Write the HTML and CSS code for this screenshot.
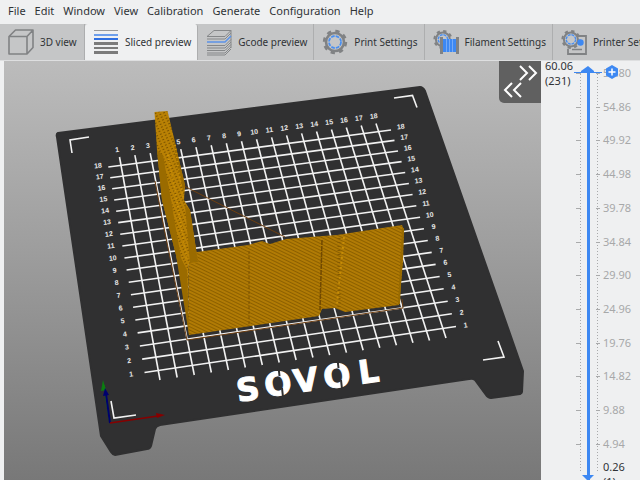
FILE: index.html
```html
<!DOCTYPE html>
<html lang="en">
<head>
<meta charset="utf-8">
<title>Slicer preview</title>
<link rel="stylesheet" href="styles.css">
</head>
<body>
<nav class="menubar" aria-label="Main menu">
  <button>File</button>
  <button>Edit</button>
  <button>Window</button>
  <button>View</button>
  <button>Calibration</button>
  <button>Generate</button>
  <button>Configuration</button>
  <button>Help</button>
</nav>

<div class="tabs" role="tablist">
  <button class="tab" role="tab">
    <svg class="icon" viewBox="0 0 28 28" fill="none" stroke="#808284" stroke-width="1.6" stroke-linejoin="round"><path d="M2 8.500H20V26H2ZM2 8.500L8.500 2H26V19.500L20 26M20 8.500L26 2"/></svg>
    <span>3D view</span>
  </button>
  <button class="tab active" role="tab" aria-selected="true">
    <svg class="icon" viewBox="0 0 28 28"><path fill="#999" d="M2 2h24v1H2z"/><path fill="#6d9eeb" d="M2 6h24v2H2z"/><path fill="#2f6fe0" d="M2 10h24v2H2z"/><path fill="#7b7b7b" d="M2 14h24v3H2zM2 19h24v2H2zM2 23h24v3H2z"/></svg>
    <span>Sliced preview</span>
  </button>
  <button class="tab" role="tab">
    <svg class="icon" viewBox="0 0 28 28" fill="none" stroke="#858789" stroke-width="1"><path d="M2 8.500L9 2.500H26L20 8.500ZM26 2.500V20M2 11h18l6-6M2 17.500h18l6-6M2 20h18l6-6M2 22.500h18l6-6M2 25h18l6-6M2 27h18l6-6"/><path stroke="#5c93e8" stroke-width="1.500" d="M2 14h18l6-6"/></svg>
    <span>Gcode preview</span>
  </button>
  <button class="tab" role="tab">
    <svg class="icon" viewBox="0 0 28 28"><use href="#gear"/></svg>
    <span>Print Settings</span>
  </button>
  <button class="tab" role="tab">
    <svg class="icon" viewBox="0 0 28 28"><use href="#gear" transform="translate(0 .5) scale(.78)"/><path fill="#808284" d="M8 9h3v17H8zM24 9h3v17h-3z"/><path fill="#3d88f2" d="M11 11h13v13H11z"/><path stroke="#76aaf5" d="M14.500 11v13M17.500 11v13M20.500 11v13"/></svg>
    <span>Filament Settings</span>
  </button>
  <button class="tab" role="tab">
    <svg class="icon" viewBox="0 0 28 28"><path fill="none" stroke="#808284" stroke-width="1.800" d="M17 8h9v18H8v-5"/><use href="#gear" transform="translate(0 .5) scale(.78)"/><path stroke="#808284" stroke-width="1.500" d="M12 21.500h10"/><circle cx="20.500" cy="14.500" r="3.200" fill="#3d88f2"/></svg>
    <span>Printer Settings</span>
  </button>
</div>

<main class="workspace">
  <section class="viewport" aria-label="Sliced model">
    <svg class="scene" viewBox="4 61 537 419" preserveAspectRatio="xMinYMin slice">
      <defs>
        <g id="gear">
          <circle cx="14" cy="14" r="9" fill="none" stroke="#808284" stroke-width="2.600"/>
          <circle cx="14" cy="14" r="10.900" fill="none" stroke="#808284" stroke-width="2.600" stroke-dasharray="4.280 4.280"/>
          <circle cx="14" cy="14" r="6" fill="none" stroke="#4a8ff0" stroke-width="1.800" stroke-dasharray="3.600 1.110"/>
        </g>
        <linearGradient id="sky" x1="0" y1="0" x2="0" y2="1"><stop offset="0" stop-color="#bcbcbc"/><stop offset="1" stop-color="#787878"/></linearGradient>
        <pattern id="layers" width="3" height="3" patternUnits="userSpaceOnUse" patternTransform="rotate(26)"><path fill="#b17b05" d="M0 0h3v3H0z"/><path fill="#8c6000" d="M0 0h3v1H0z"/></pattern>
        <pattern id="rough" width="4" height="3" patternUnits="userSpaceOnUse" patternTransform="rotate(-25)"><path fill="#b98104" d="M0 0h4v3H0z"/><path fill="#7d5500" d="M0 0h2v1H0z"/></pattern>
      </defs>
      <path fill="url(#sky)" d="M4 61h537v419H4z"/>
      <path fill="#303031" stroke="#303031" stroke-width="2" stroke-linejoin="round" d="M58 133L420 87Q423 87 425 91L523 371L522 392Q522 393 520 394L491 398Q488 398 486 395L475 380Q473 378 469 379L160 425Q156 426 155 429L151 446Q150 449 147 449L115 455Q113 455 111 452L101 436L57 137Q56 134 58 133Z"/>
      <g fill="none" stroke="#f2f2f2" stroke-width="1.600">
        <path d="M89 137L70 140L72 153M394 98L412.500 95.500L417 107.500M111 401L114 418L136 415M498 341L504 357L483 360"/>
        <g id="grid"></g>
      </g>
      <g id="marks" class="marks"></g>
      <g class="brand">
        <text transform="translate(238 402) rotate(-8)">S</text>
        <text transform="translate(266 397) rotate(-8)">O</text>
        <text transform="translate(295 393) rotate(-8)">V</text>
        <text transform="translate(325 389) rotate(-8)">O</text>
        <text transform="translate(360 384) rotate(-8)">L</text>
      </g>
      <path stroke="#303031" stroke-width="2" d="M278.500 367l1 9M282 388l1 9M337.500 359l1 9M341 380l1 9"/>
      <path fill="none" stroke="#6e3f12" d="M155 181L164 228L187 340L403 308L402 299M184 186L285 237"/>
      <path fill="url(#layers)" d="M188 253L197 252L248 245L262 241L270 244L286 239L323 236L337 235L402 225L404 230L403 262L399 305L345 312L335 308L322 309L319 316L189 335Z"/>
      <path fill="url(#rough)" d="M154.500 112L167.500 111L174 138L179 160L185 185L184 200L190 210L198 262L188 264L189 335L184 295L176 255L162 200L157 150Z"/>
      <path fill="#9a6b00" d="M157 150L163 155L171 200L181 258L187 270L189 335L176 255L162 200ZM173 135L179 160L185 185L183 191L176 160ZM185 205L190 210L198 262L190 263Z"/>
      <path fill="none" stroke="#d19406" stroke-width="2" stroke-dasharray="1 3" d="M168 155L174 185L181 225L187 260M175 145L183 198"/>
      <path fill="none" stroke="#7d5300" stroke-width="1" stroke-dasharray="3 2" d="M249 251L249 324"/>
      <path fill="none" stroke="#714900" stroke-width="1.500" stroke-dasharray="5 1" d="M322 240L320 310"/>
      <path fill="none" stroke="#865a00" stroke-width="3" stroke-dasharray="1 3" d="M339 238L339 310"/>
      <path fill="none" stroke="#c78d07" stroke-width="2" stroke-dasharray="2 3" d="M344 237L337 304"/>
      <path fill="none" stroke="#996b00" stroke-width="2" d="M403 228L399 304"/>
      <path stroke="#0b7d10" stroke-width="1.500" d="M110 423L104 385"/><path fill="#0b7d10" d="M103 380l3 10-5 1z"/>
      <path stroke="#00006e" stroke-width="2" d="M110 423L106 394"/><path fill="#00006e" d="M105 388l4 7-6 1z"/>
      <path stroke="#860000" stroke-width="1.500" d="M110 423L158 416"/><path fill="#860000" d="M165 415l-9-2 1 5z"/>
    </svg>
    <button class="collapse" aria-label="Toggle sidebar">
      <svg viewBox="0 0 42 43" fill="none" stroke="#fff" stroke-width="2"><path d="M21 5l7 7-7 7M30 5l7 7-7 7M13 22l-7 7 7 7M22 22l-7 7 7 7"/></svg>
    </button>
  </section>

  <aside class="layers">
    <output class="current">60.06<br>(231)</output>
    <div class="track">
      <svg class="cap" viewBox="0 0 28 8"><path fill="#3d88f2" d="M7 5L14 0L20 5V6H7Z"/><path fill="#3d88f2" d="M0 6h28v1H0z"/></svg>
      <input class="range" type="range" min="0.26" max="60.06" step="0.01" value="60.06" aria-label="Top layer">
    </div>
    <ol class="scale">
      <li>59.80</li><li>54.86</li><li>49.92</li><li>44.98</li><li>39.78</li><li>34.84</li><li>29.90</li><li>24.96</li><li>19.76</li><li>14.82</li><li>9.88</li><li>4.94</li>
    </ol>
    <button class="add" aria-label="Add layer change">
      <svg viewBox="0 0 12 14"><path fill="#3d88f2" d="M6 0l6 3.500v7L6 14 0 10.500v-7z"/><path stroke="#fff" stroke-width="1.500" d="M6 3.500v7M2.500 7h7"/></svg>
    </button>
    <output class="lowest">0.26<br>(1)</output>
  </aside>
</main>
<script src="script.js"></script>
</body>
</html>
```

FILE: styles.css
```css
* { box-sizing: border-box; }

body {
  margin: 0;
  height: 100vh;
  display: flex;
  flex-direction: column;
  overflow: hidden;
  background: #eff0f1;
  color: #303336;
  font: 11px/15px "Noto Sans", "Open Sans", sans-serif;
}

button {
  border: 0;
  padding: 0;
  background: none;
  color: inherit;
  font: inherit;
}

.menubar {
  display: flex;
  flex: none;
  gap: 9px;
  height: 24px;
  padding: 0 8px 3px;
}

.tabs {
  display: flex;
  flex: none;
  height: 37px;
  background: #c5c6c7;
  border-bottom: 1px solid #dedfe0;
  overflow: hidden;
}

.tab {
  display: flex;
  flex: none;
  align-items: center;
  gap: 5px;
  min-width: 85px;
  padding: 0 6px 0 7px;
  border-right: 1px solid #adaeaf;
  font-size: 10px;
  white-space: nowrap;
}

.tab.active {
  background: #eff0f1;
  border-radius: 3px 3px 0 0;
}

.icon { width: 28px; height: 28px; }

.workspace {
  display: flex;
  flex: 1;
  min-height: 0;
}

.viewport {
  position: relative;
  flex: 1;
  min-width: 0;
  margin-left: 4px;
}

.scene {
  display: block;
  width: 100%;
  height: 100%;
}

.marks {
  fill: #e8e8e8;
  font: bold 7px "Liberation Sans", sans-serif;
  text-anchor: middle;
}

.brand {
  fill: #fff;
  stroke: #fff;
  stroke-width: 1px;
  font: bold 32px "DejaVu Sans", sans-serif;
}

.collapse {
  position: absolute;
  top: 0;
  right: 0;
  width: 42px;
  height: 42px;
  background: #606060;
  border-radius: 0 0 0 5px;
}

.collapse svg { display: block; width: 100%; }

.layers {
  position: relative;
  display: grid;
  grid-template-columns: 32px 30px 1fr;
  grid-template-rows: minmax(0, 1fr);
  flex: none;
  width: 99px;
}

.current {
  grid-area: 1 / 1;
  padding: 0 0 0 4px;
  margin-top: -3px;
  white-space: nowrap;
}

.track {
  position: relative;
  grid-area: 1 / 2;
  display: flex;
  justify-content: center;
  background: linear-gradient(#3d88f2, #3d88f2) 14px 7px / 3px 100% no-repeat;
}

.cap {
  position: absolute;
  top: 5px;
  left: 1px;
  width: 28px;
}

.range {
  appearance: none;
  writing-mode: vertical-lr;
  direction: rtl;
  width: 16px;
  height: 100%;
  margin: 0;
  background: none;
}

.range::-webkit-slider-thumb {
  appearance: none;
  width: 12px;
  height: 8px;
  background: none;
}

.track::before,
.track::after {
  content: "";
  position: absolute;
  top: 13px;
  bottom: 8px;
  left: 7px;
  width: 1px;
  background: repeating-linear-gradient(#a9aaab 0 1px, transparent 1px 3px);
}

.track::after { left: 24px; }

.scale {
  display: flex;
  grid-area: 1 / 3;
  flex-direction: column;
  justify-content: space-between;
  margin: 4px 0 29px;
  padding: 0;
  list-style: none;
  color: #a7a8a9;
}

.scale li { position: relative; }

.scale li::before {
  content: "";
  position: absolute;
  top: 8px;
  left: -27px;
  width: 24px;
  height: 1px;
  background: linear-gradient(90deg, #a9aaab 5px, transparent 5px 20px, #a9aaab 20px);
}

.add {
  position: absolute;
  top: 4px;
  left: 65px;
  width: 12px;
  height: 14px;
}

.add svg { display: block; }

.lowest {
  position: absolute;
  bottom: -9px;
  left: 62px;
}

.lowest::before {
  content: "";
  position: absolute;
  top: 16px;
  left: -21px;
  border: solid transparent;
  border-width: 6px 6px 0;
  border-top-color: #3d88f2;
}
```

FILE: script.js
```js
const NS = "http://www.w3.org/2000/svg";
const grid = document.getElementById("grid");
const marks = document.getElementById("marks");

// Point on a smooth curve through its start, middle and end.
function along(start, middle, end, t) {
  return start.map((s, i) =>
    s * (1 - t) * (1 - 2 * t) + middle[i] * 4 * t * (1 - t) + end[i] * t * (2 * t - 1));
}

function line(a, b) {
  const path = document.createElementNS(NS, "path");
  path.setAttribute("d", `M${a}L${b}`);
  grid.append(path);
}

function mark(number, [x, y]) {
  const text = document.createElementNS(NS, "text");
  text.setAttribute("transform", `translate(${x} ${y}) rotate(-8)`);
  text.textContent = number;
  marks.append(text);
}

for (let n = 1; n <= 18; n++) {
  const t = (n - 1) / 17;
  const left = along([144.5, 372.5], [125.5, 264], [108.3, 167], t);
  const right = along([456, 326.5], [422, 223], [391, 130], t);
  const top = along([119.5, 157], [249, 140.3], [376, 123.5], t);
  const bottom = along([160, 380], [304.5, 358.8], [446, 338], t);
  line(left, right);
  line(top, bottom);
  mark(n, [left[0] - 13 + t * 3, left[1] + 4 - t * 3]);
  mark(n, [right[0] + 10, right[1] + 1 - t * 2]);
  if (n !== 4) mark(n, [top[0] - 2, top[1] - 5]);
}
```
